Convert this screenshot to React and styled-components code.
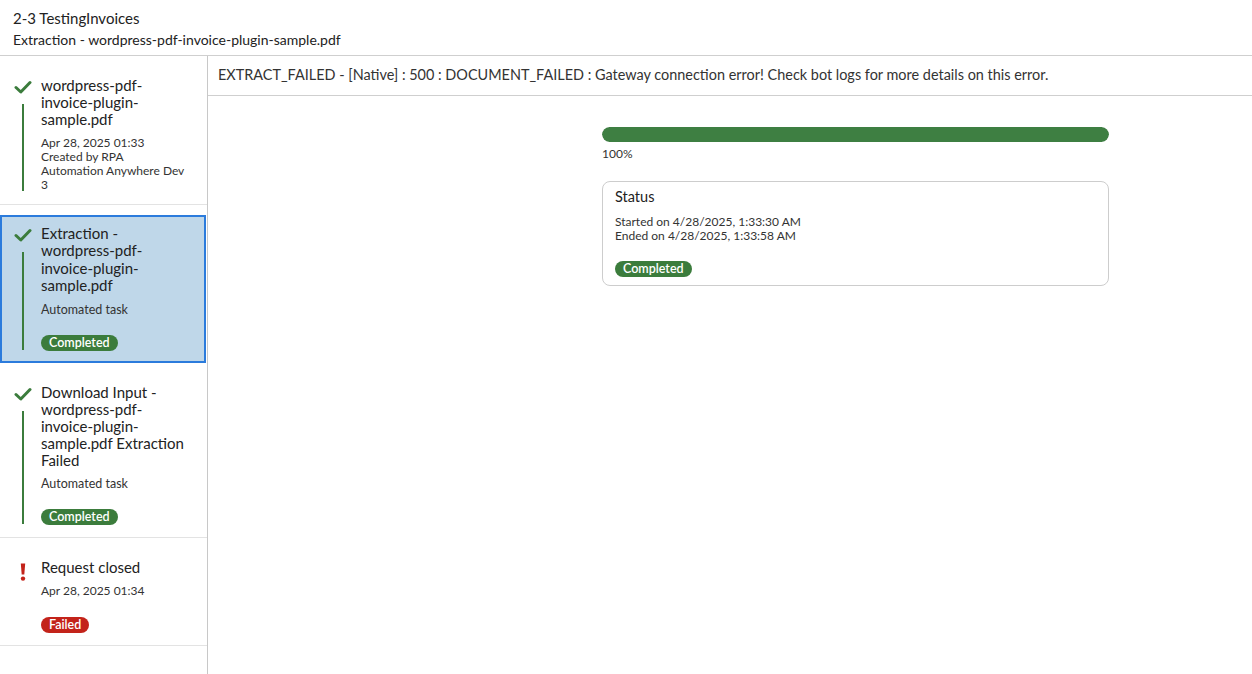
import React from "react";
import styled, { createGlobalStyle } from "styled-components";

const Global = createGlobalStyle`
  html, body { margin: 0; padding: 0; background: #fff; }
  body { font-family: Lato, "Noto Sans", sans-serif; color: #2b2b2b; }
  #root { height: 674px; }
  * { box-sizing: border-box; }
`;

const Page = styled.div`
  display: flex;
  flex-direction: column;
  height: 674px;
  width: 1252px;
  overflow: hidden;
`;

const Header = styled.header`
  height: 56px;
  padding: 9px 13px 0;
  border-bottom: 1px solid #cfcfcf;
  flex-shrink: 0;
`;

const Title = styled.div`
  font-size: 15px;
  line-height: 18px;
  color: #222;
`;

const Subtitle = styled.div`
  font-size: 14px;
  line-height: 18px;
  margin-top: 4px;
  color: #222;
`;

const Body = styled.div`
  display: flex;
  flex: 1;
  min-height: 0;
`;

const Sidebar = styled.aside`
  width: 208px;
  flex-shrink: 0;
  border-right: 1px solid #c8c8c8;
  display: flex;
  flex-direction: column;
`;

const Item = styled.div`
  display: grid;
  grid-template-columns: ${(p) => (p.$selected ? "39px" : "41px")} 1fr;
  padding: ${(p) => (p.$selected ? "8px 4px 10px 0" : "21px 6px 12px 0")};
  margin-bottom: ${(p) => p.$gap || 0}px;
  border: ${(p) => (p.$selected ? "2px solid #2b7bdc" : "none")};
  border-bottom: ${(p) =>
    p.$selected ? "2px solid #2b7bdc" : "1px solid #e3e3e3"};
  background: ${(p) => (p.$selected ? "#bfd7e9" : "transparent")};
  margin-right: ${(p) => (p.$selected ? "1px" : "0")};
`;

const Rail = styled.div`
  display: flex;
  flex-direction: column;
  align-items: center;
  width: 36px;
  margin-left: ${(p) => (p.$selected ? "3px" : "5px")};
  padding-top: 3px;
`;

const Line = styled.div`
  width: 2px;
  flex: 1;
  background: #3b7c3c;
  margin-top: 10px;
  margin-bottom: 1px;
`;

const Content = styled.div`
  display: flex;
  flex-direction: column;
  align-items: flex-start;
`;

const ItemTitle = styled.div`
  font-size: 15px;
  line-height: ${(p) => (p.$selected ? "17.3px" : "17px")};
  color: #222;
  padding-right: 8px;
`;

const Meta = styled.div`
  font-size: ${(p) => (p.$task ? "12.5px" : "12px")};
  line-height: 14px;
  color: #333;
  margin-top: ${(p) => p.$mt || 6}px;
`;

const Badge = styled.span`
  display: inline-block;
  font-size: 12.5px;
  line-height: 16px;
  font-weight: 600;
  color: #fff;
  background: ${(p) => (p.$failed ? "#c3231a" : "#3b7c3c")};
  border-radius: 9px;
  padding: 0 8px;
  margin-top: ${(p) => p.$mt || 18}px;
`;

const Main = styled.main`
  flex: 1;
  display: flex;
  flex-direction: column;
`;

const ErrorBar = styled.div`
  height: 40px;
  padding: 10px 10px 0;
  font-size: 14.45px;
  line-height: 18px;
  color: #333;
  border-bottom: 1px solid #cfcfcf;
`;

const Panel = styled.div`
  margin-left: 394px;
  width: 507px;
  padding-top: 31px;
`;

const Track = styled.div`
  height: 15px;
  border-radius: 8px;
  background: #e5e5e5;
  overflow: hidden;
`;

const Fill = styled.div`
  height: 100%;
  background: #3e7f42;
  border-radius: 8px;
`;

const Percent = styled.div`
  font-size: 12px;
  line-height: 14px;
  margin-top: 5px;
  color: #333;
`;

const Card = styled.div`
  margin-top: 20px;
  border: 1px solid #cdcdcd;
  border-radius: 8px;
  height: 105px;
  padding: 6px 12px 0;
  display: flex;
  flex-direction: column;
  align-items: flex-start;
`;

const CardTitle = styled.div`
  font-size: 14.5px;
  line-height: 18px;
  color: #222;
`;

const CardLines = styled.div`
  font-size: 12px;
  line-height: 14px;
  color: #333;
  margin-top: 9px;
`;

const Check = () => (
  <svg width="18" height="14" viewBox="0 0 18 14">
    <path
      d="M2 7.5 L6.8 12 L16 2.5"
      fill="none"
      stroke="#3b7c3c"
      strokeWidth="3"
      strokeLinecap="round"
      strokeLinejoin="round"
    />
  </svg>
);

const Bang = () => (
  <svg width="8" height="20" viewBox="0 0 8 20">
    <path d="M1.8 1.5 h4.4 l-0.9 11 h-2.6 z" fill="#c3231a" />
    <circle cx="4" cy="16.6" r="2.2" fill="#c3231a" />
  </svg>
);

const items = [
  {
    title: ["wordpress-pdf-", "invoice-plugin-", "sample.pdf"],
    meta: ["Apr 28, 2025 01:33", "Created by RPA", "Automation Anywhere Dev", "3"],
    gap: 10,
  },
  {
    title: ["Extraction -", "wordpress-pdf-", "invoice-plugin-", "sample.pdf"],
    task: true,
    badge: "Completed",
    selected: true,
  },
  {
    title: [
      "Download Input -",
      "wordpress-pdf-",
      "invoice-plugin-",
      "sample.pdf Extraction",
      "Failed",
    ],
    task: true,
    badge: "Completed",
  },
  {
    title: ["Request closed"],
    meta: ["Apr 28, 2025 01:34"],
    badge: "Failed",
    failed: true,
  },
];

export default function App() {
  return (
    <Page>
      <Global />
      <Header>
        <Title>2-3 TestingInvoices</Title>
        <Subtitle>Extraction - wordpress-pdf-invoice-plugin-sample.pdf</Subtitle>
      </Header>
      <Body>
        <Sidebar>
          {items.map((it, i) => (
            <Item key={i} $selected={it.selected} $gap={it.gap}>
              <Rail $selected={it.selected}>
                {it.failed ? <Bang /> : <Check />}
                {!it.failed && <Line />}
              </Rail>
              <Content>
                <ItemTitle $selected={it.selected}>
                  {it.title.map((t, j) => (
                    <div key={j}>{t}</div>
                  ))}
                </ItemTitle>
                {it.meta && (
                  <Meta $mt={8}>
                    {it.meta.map((m, j) => (
                      <div key={j}>{m}</div>
                    ))}
                  </Meta>
                )}
                {it.task && (
                  <Meta $task $mt={it.selected ? 9 : 8}>
                    Automated task
                  </Meta>
                )}
                {it.badge && (
                  <Badge $failed={it.failed} $mt={it.failed ? 19 : 18}>
                    {it.badge}
                  </Badge>
                )}
              </Content>
            </Item>
          ))}
        </Sidebar>
        <Main>
          <ErrorBar>
            EXTRACT_FAILED - [Native] : 500 : DOCUMENT_FAILED : Gateway connection
            error! Check bot logs for more details on this error.
          </ErrorBar>
          <Panel>
            <Track>
              <Fill style={{ width: "100%" }} />
            </Track>
            <Percent>100%</Percent>
            <Card>
              <CardTitle>Status</CardTitle>
              <CardLines>
                <div>Started on 4/28/2025, 1:33:30 AM</div>
                <div>Ended on 4/28/2025, 1:33:58 AM</div>
              </CardLines>
              <Badge $mt={18}>Completed</Badge>
            </Card>
          </Panel>
        </Main>
      </Body>
    </Page>
  );
}
